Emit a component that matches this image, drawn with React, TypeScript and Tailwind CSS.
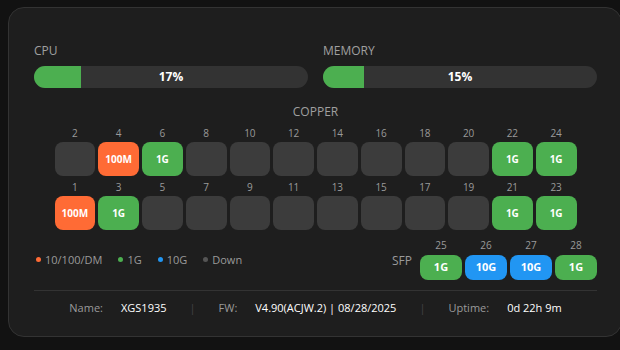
const copperTop = [
  { n: 2, s: '' }, { n: 4, s: '100M' }, { n: 6, s: '1G' }, { n: 8, s: '' }, { n: 10, s: '' }, { n: 12, s: '' },
  { n: 14, s: '' }, { n: 16, s: '' }, { n: 18, s: '' }, { n: 20, s: '' }, { n: 22, s: '1G' }, { n: 24, s: '1G' },
];
const copperBottom = [
  { n: 1, s: '100M' }, { n: 3, s: '1G' }, { n: 5, s: '' }, { n: 7, s: '' }, { n: 9, s: '' }, { n: 11, s: '' },
  { n: 13, s: '' }, { n: 15, s: '' }, { n: 17, s: '' }, { n: 19, s: '' }, { n: 21, s: '1G' }, { n: 23, s: '1G' },
];
const sfp = [
  { n: 25, s: '1G' }, { n: 26, s: '10G' }, { n: 27, s: '10G' }, { n: 28, s: '1G' },
];

const speedColor = (s: string) => {
  if (s === '100M') return 'bg-[#ff6b35]';
  if (s === '1G') return 'bg-[#4caf50]';
  if (s === '10G') return 'bg-[#2196f3]';
  return 'bg-[#3c3c3c]';
};

const Bar = ({ label, value }: { label: string; value: number }) => (
  <div className="flex flex-col">
    <div className="text-[12px] leading-[16px] text-[#a0a0a0] mb-[7px]">{label}</div>
    <div className="relative h-[22px] rounded-full bg-[#333333] overflow-hidden">
      <div className="h-full bg-[#4caf50]" style={{ width: `${value}%` }} />
      <div className="absolute inset-0 flex items-center justify-center text-[12px] font-bold text-white">
        {value}%
      </div>
    </div>
  </div>
);

const PortRow = ({ ports }: { ports: { n: number; s: string }[] }) => (
  <div className="grid grid-cols-12 gap-x-[3px] w-[522px]">
    {ports.map((p) => (
      <div key={p.n} className="flex flex-col items-stretch">
        <div className="h-[14px] leading-[14px] text-center text-[10px] text-[#9a9a9a] mb-[2px]">{p.n}</div>
        <div
          className={`h-[34px] rounded-[8px] flex items-center justify-center text-[10px] font-bold text-white ${speedColor(p.s)}`}
        >
          {p.s}
        </div>
      </div>
    ))}
  </div>
);

const Legend = ({ color, label }: { color: string; label: string }) => (
  <div className="flex items-center gap-[4px]">
    <span className={`w-[5px] h-[5px] rounded-full ${color}`} />
    <span>{label}</span>
  </div>
);

export default function App() {
  return (
    <div
      className="w-[620px] h-[350px] overflow-hidden bg-[#121212] pt-[7px] pl-[8px]"
      style={{ fontFamily: '"Open Sans", "Noto Sans", sans-serif' }}
    >
      <div className="w-[614px] h-[330px] rounded-[16px] border border-[#333333] bg-[#1e1e1e] pt-[35px] pl-[25px] pr-[24px]">
        <div className="w-[563px]">
          <div className="grid grid-cols-2 gap-x-[15px]">
            <Bar label="CPU" value={17} />
            <Bar label="MEMORY" value={15} />
          </div>

          <div className="mt-[16px] flex flex-col items-center">
            <div className="text-[12px] leading-[16px] text-[#a0a0a0]">COPPER</div>
            <div className="mt-[6px] flex flex-col gap-y-[4px]">
              <PortRow ports={copperTop} />
              <PortRow ports={copperBottom} />
            </div>
          </div>

          <div className="mt-[8px] flex items-end justify-between">
            <div className="flex items-center gap-[16px] text-[11px] text-[#9a9a9a] pl-[2px] mb-[12px]">
              <Legend color="bg-[#ff6b35]" label="10/100/DM" />
              <Legend color="bg-[#4caf50]" label="1G" />
              <Legend color="bg-[#2196f3]" label="10G" />
              <Legend color="bg-[#555555]" label="Down" />
            </div>
            <div className="flex items-end gap-[8px]">
              <div className="text-[12px] leading-[16px] text-[#9a9a9a] mb-[11px]">SFP</div>
              <div className="flex gap-[3px]">
                {sfp.map((p) => (
                  <div key={p.n} className="flex flex-col w-[42px]">
                    <div className="h-[14px] leading-[14px] text-center text-[10px] text-[#9a9a9a] mb-[3px]">{p.n}</div>
                    <div
                      className={`h-[25px] rounded-[8px] flex items-center justify-center text-[11px] font-bold text-white ${speedColor(p.s)}`}
                    >
                      {p.s}
                    </div>
                  </div>
                ))}
              </div>
            </div>
          </div>

          <div className="mt-[10px] h-px bg-[#333333]" />

          <div className="mt-[9px] flex items-center justify-center text-[11px] leading-[16px]">
            <span className="text-[#9a9a9a]">Name:</span>
            <span className="ml-[18px] font-medium text-white">XGS1935</span>
            <span className="mx-[23px] text-[#444444]">|</span>
            <span className="text-[#9a9a9a]">FW:</span>
            <span className="ml-[18px] font-medium text-white">V4.90(ACJW.2) | 08/28/2025</span>
            <span className="mx-[23px] text-[#444444]">|</span>
            <span className="text-[#9a9a9a]">Uptime:</span>
            <span className="ml-[18px] font-medium text-white">0d 22h 9m</span>
          </div>
        </div>
      </div>
    </div>
  );
}
